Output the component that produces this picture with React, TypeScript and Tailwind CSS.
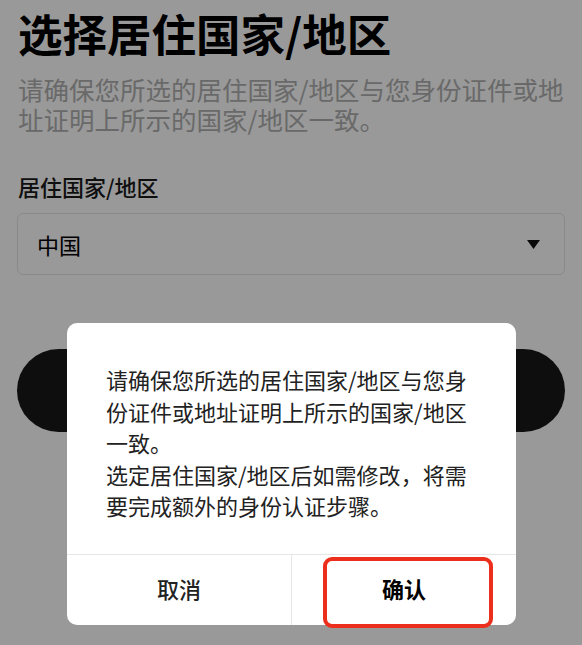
import React from 'react'

const message = [
  '请确保您所选的居住国家/地区与您身份证件或地址证明上所示的国家/地区一致。',
  '选定居住国家/地区后如需修改，将需要完成额外的身份认证步骤。',
]

function CaretDown() {
  return (
    <svg width="13" height="9" viewBox="0 0 13 9" className="shrink-0">
      <polygon points="0,0 13,0 6.5,9" fill="#111111" />
    </svg>
  )
}

export default function App() {
  return (
    <div className="relative w-[582px] h-[645px] overflow-hidden bg-white font-['Noto_Sans_CJK_SC','Noto_Sans',sans-serif]">
      {/* page under the dialog */}
      <div className="flex flex-col px-[17px] pt-[7px]">
        <h1 className="pl-px text-[44.5px] leading-[52px] font-bold text-black">选择居住国家/地区</h1>
        <p className="mt-[15px] pl-px w-[560px] text-[25.5px] leading-[30px] text-[#b0b0b0]">
          请确保您所选的居住国家/地区与您身份证件或地址证明上所示的国家/地区一致。
        </p>
        <label className="mt-[37px] pl-px text-[22px] leading-[30px] font-medium text-[#1a1a1a]">居住国家/地区</label>
        <div className="mt-[12px] h-[62px] flex items-center justify-between rounded-[6px] border border-[#e4e4e4] bg-white pl-[19px] pr-[24px]">
          <span className="text-[22px] leading-[30px] text-black">中国</span>
          <CaretDown />
        </div>
        <div className="mt-[74px] h-[83px] rounded-full bg-[#181818]" />
      </div>

      {/* overlay */}
      <div className="absolute inset-0 bg-black/40" />

      {/* dialog */}
      <div className="absolute left-[67px] top-[323px] w-[449px] h-[302px] flex flex-col rounded-[10px] bg-white">
        <div className="flex-1 pl-[39px] pr-[39px] pt-[41px] text-[22px] leading-[31.5px] text-[#222222]">
          {message.map((line, i) => (
            <p key={i}>{line}</p>
          ))}
        </div>
        <div className="h-[71px] flex border-t border-[#e6e6e6]">
          <button className="flex-1 flex items-center justify-center pb-[3px] text-[22px] font-medium text-[#222222]">取消</button>
          <div className="w-px bg-[#e6e6e6]" />
          <button className="flex-1 flex items-center justify-center pb-[3px] text-[22px] font-bold text-black">确认</button>
        </div>
      </div>

      {/* highlight annotation */}
      <div className="absolute left-[323px] top-[557px] w-[170px] h-[71px] rounded-[9px] border-4 border-[#ec2f1c]" />
    </div>
  )
}
